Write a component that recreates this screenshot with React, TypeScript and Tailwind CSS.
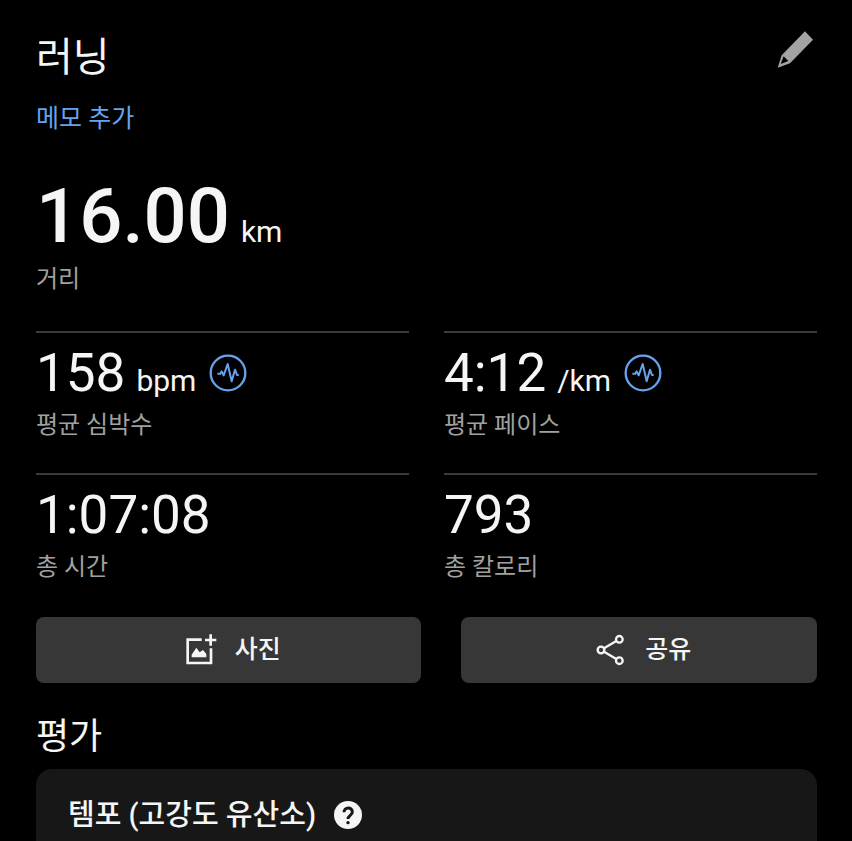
import type { ReactNode } from "react";

const stats = [
  { value: "158", unit: "bpm", label: "평균 심박수", zone: true },
  { value: "4:12", unit: "/km", label: "평균 페이스", zone: true },
  { value: "1:07:08", unit: "", label: "총 시간", zone: false },
  { value: "793", unit: "", label: "총 칼로리", zone: false },
];

function PencilIcon() {
  return (
    <svg className="size-10" viewBox="0 0 120 120" aria-hidden="true">
      <path
        fill="#a3a3a3"
        fillRule="evenodd"
        d="M90 4 L114 29 L45 100 L8 113 L20 76 Z M26 79 L40 93 L17 102 Z"
      />
    </svg>
  );
}

function PulseIcon() {
  return (
    <svg className="size-10" viewBox="0 0 120 120" fill="none" stroke="#66a3ee" aria-hidden="true">
      <circle cx="60" cy="60" r="52" strokeWidth="7" />
      <path
        d="M28 62 L37 62 L41 55 L47 67 L59 33 L71 85 L81 50 L87 66 L92 66"
        strokeWidth="6"
        strokeLinejoin="round"
      />
    </svg>
  );
}

function PhotoIcon() {
  return (
    <svg className="size-8" viewBox="0 0 96 96" fill="none" stroke="#f5f5f5" aria-hidden="true">
      <path d="M50 17 H8 V87 H78 V43" strokeWidth="8" />
      <path d="M77 1 V35 M60 18 H94" strokeWidth="8" />
      <path d="M20 70 V62 L34 41 L44 55 L54 48 L64 60 V70 Z" fill="#f5f5f5" stroke="none" />
    </svg>
  );
}

function ShareIcon() {
  return (
    <svg className="size-8" viewBox="0 0 96 96" fill="none" stroke="#f5f5f5" strokeWidth="7" aria-hidden="true">
      <circle cx="18" cy="48" r="10" />
      <circle cx="73" cy="16" r="10" />
      <circle cx="73" cy="80" r="10" />
      <path d="M27 43 L64 21 M27 53 L64 75" />
    </svg>
  );
}

function HelpIcon() {
  return (
    <svg className="size-7" viewBox="0 0 84 84" fill="none" aria-hidden="true">
      <circle cx="42" cy="42" r="42" fill="#f5f5f5" />
      <path d="M30 34 C30 17 55 17 55 33 C55 43 42 43 42 54" stroke="#171717" strokeWidth="9" />
      <circle cx="42" cy="65" r="5" fill="#171717" />
    </svg>
  );
}

function ActionButton({ className, icon, children }: { className: string; icon: ReactNode; children: ReactNode }) {
  return (
    <button
      type="button"
      className={`flex h-[66px] items-center justify-center rounded-lg bg-[#373737] text-[25px] leading-8 font-medium ${className}`}
    >
      <span className="flex items-center gap-[18px] pl-2">
        {icon}
        {children}
      </span>
    </button>
  );
}

function App() {
  return (
    <main className="flex min-h-screen flex-col bg-black pt-[34px] pr-[35px] pl-9 font-['Roboto','Noto_Sans_CJK_KR',sans-serif] text-neutral-100">
      {/* 제목 */}
      <header className="flex items-start justify-between">
        <h1 className="text-[40px] leading-12">러닝</h1>
        <button type="button" aria-label="수정" className="-mt-1 mr-0.5">
          <PencilIcon />
        </button>
      </header>
      <a href="#memo" className="mt-[21px] self-start text-[25px] leading-8 text-[#66a3ee]">
        메모 추가
      </a>

      {/* 거리 */}
      <section className="mt-[41px]">
        <p className="text-[76px] leading-20 font-medium">
          16.00<span className="ml-[11px] text-[30px] leading-none font-normal">km</span>
        </p>
        <p className="mt-[7px] text-[24px] leading-8 text-neutral-400">거리</p>
      </section>

      {/* 통계 */}
      <section className="mt-9 grid grid-cols-2 gap-x-[35px] gap-y-8">
        {stats.map((s) => (
          <div key={s.label} className="border-t-2 border-[#3b3b3b] pt-3">
            <div className="flex h-14 items-center gap-3">
              <p className="text-[53px] leading-14">
                {s.value}
                {s.unit && <span className="ml-[11px] text-[30px] leading-none">{s.unit}</span>}
              </p>
              {s.zone && <PulseIcon />}
            </div>
            <p className="mt-2 text-[24px] leading-8 text-neutral-400">{s.label}</p>
          </div>
        ))}
      </section>

      <div className="mt-[34px] flex gap-10">
        <ActionButton className="flex-[13]" icon={<PhotoIcon />}>
          사진
        </ActionButton>
        <ActionButton className="flex-[12]" icon={<ShareIcon />}>
          공유
        </ActionButton>
      </div>

      {/* 평가 */}
      <h2 className="mt-[34px] text-[36px] leading-10">평가</h2>
      <section className="mt-3 grow rounded-t-2xl bg-[#171717] px-8 pt-[26px]">
        <div className="flex items-center gap-[18px]">
          <h3 className="text-[29px] leading-10 font-medium">템포 (고강도 유산소)</h3>
          <button type="button" aria-label="도움말">
            <HelpIcon />
          </button>
        </div>
      </section>
    </main>
  );
}

export default App;
